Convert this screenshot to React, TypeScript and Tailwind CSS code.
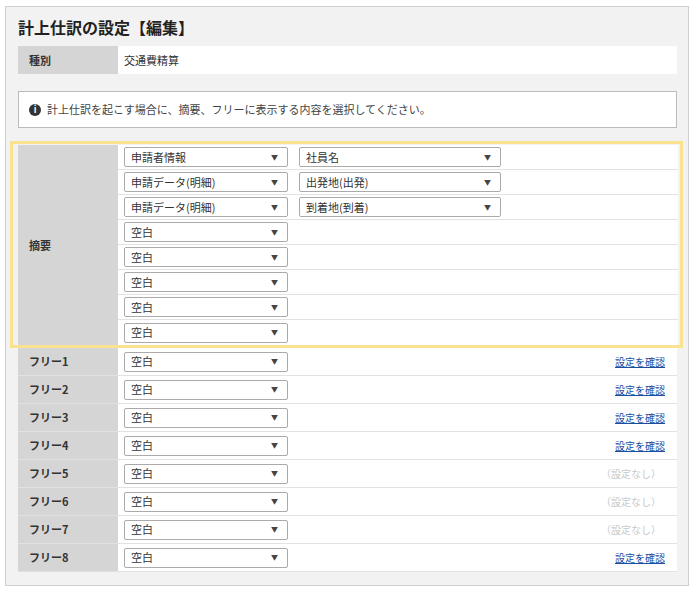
import React from "react";

const Sel = ({ v, w = "w-[164px]" }: { v: string; w?: string }) => (
  <div className={`${w} h-[20px] bg-white border border-[#aaa] rounded-[2px] flex items-center justify-between pl-[6px] pr-[9px] text-[11px] text-[#333]`}>
    <span>{v}</span>
    <span className="text-[7px] text-[#444]">▼</span>
  </div>
);

export default function App() {
  const summary: [string, string?][] = [
    ["申請者情報", "社員名"],
    ["申請データ(明細)", "出発地(出発)"],
    ["申請データ(明細)", "到着地(到着)"],
    ["空白"], ["空白"], ["空白"], ["空白"], ["空白"],
  ];
  const frees = [true, true, true, true, false, false, false, true];
  return (
    <div className="w-[694px] h-[592px] bg-white pt-[6px] px-[5px]" style={{ fontFamily: '"Noto Sans CJK JP", "Noto Sans", sans-serif' }}>
      <div className="h-[580px] bg-[#f2f2f2] border border-[#cfcfcf] pl-[12px] pr-[11px]">
        <div className="h-[39px] pt-[8px] text-[16px] font-bold text-[#222] leading-[24px]">計上仕訳の設定【編集】</div>
        <div className="flex h-[28px] text-[11px]">
          <div className="w-[100px] bg-[#d5d5d5] font-bold pl-[11px] flex items-center text-[#333]">種別</div>
          <div className="flex-1 bg-white pl-[6px] flex items-center text-[#333]">交通費精算</div>
        </div>
        <div className="mt-[17px] h-[37px] bg-white border border-[#bbb] flex items-center pl-[10px] text-[11px] text-[#444]">
          <span className="w-[12px] h-[12px] rounded-full bg-[#333] text-white text-[9px] font-bold flex items-center justify-center mr-[6px]">i</span>
          計上仕訳を起こす場合に、摘要、フリーに表示する内容を選択してください。
        </div>
        <div className="mt-[13px] -ml-[8px] -mr-[6px] border-[3px] border-[#fbe28e] pl-[5px] pr-[2px] pt-[1px]">
          <div className="flex">
            <div className="w-[100px] bg-[#d5d5d5] font-bold text-[11px] pl-[11px] flex items-center text-[#333]">摘要</div>
            <div className="flex-1 bg-white">
              {summary.map(([a, b], i) => (
                <div key={i} className={`h-[25px] flex items-center pl-[6px] gap-[11px] ${i < 7 ? "border-b border-[#e2e2e2]" : ""}`}>
                  <Sel v={a} />
                  {b && <Sel v={b} w="w-[202px]" />}
                </div>
              ))}
            </div>
          </div>
        </div>
        {frees.map((on, i) => (
          <div key={i} className="flex h-[28px] border-b border-[#e2e2e2]">
            <div className="w-[100px] bg-[#d5d5d5] font-bold text-[11px] pl-[11px] flex items-center text-[#333]">フリー{i + 1}</div>
            <div className="flex-1 bg-white flex items-center pl-[6px] pr-[12px] justify-between">
              <Sel v="空白" />
              {on ? (
                <a className="text-[10px] text-[#1a4fa0] underline">設定を確認</a>
              ) : (
                <span className="text-[10px] text-[#c8c8c8] pr-[4px]">（設定なし）</span>
              )}
            </div>
          </div>
        ))}
      </div>
    </div>
  );
}
